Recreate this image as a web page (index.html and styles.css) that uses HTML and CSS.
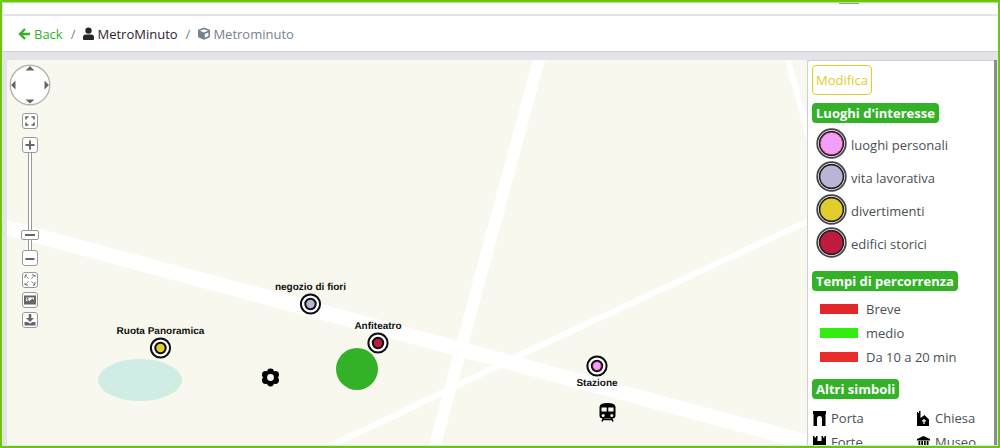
FILE: index.html
```html
<!DOCTYPE html>
<html lang="it">
<head>
    <meta charset="UTF-8">
    <meta name="viewport" content="width=device-width, initial-scale=1.0">
    <title>Metrominuto</title>
    <link rel="stylesheet" href="styles.css">
</head>
<body>
    <header class="topbar">
        <div class="tab-handle"></div>
    </header>

    <nav class="breadcrumb" aria-label="breadcrumb">
        <a href="#" class="back">
            <svg width="13" height="14" viewBox="0 0 13 14"><path d="M7 2 L2 7 L7 12 M2 7 H12" fill="none" stroke="currentColor" stroke-width="2.4"/></svg>
            Back
        </a>
        <span class="slash">/</span>
        <a href="#" class="project">
            <svg width="11" height="13" viewBox="0 0 11 13"><circle cx="5.5" cy="3.6" r="3.2"/><path d="M0 12 V10 Q0 7.5 3 7.5 H8 Q11 7.5 11 10 V12 Q11 13 10.2 13 H.8 Q0 13 0 12Z"/></svg>
            MetroMinuto
        </a>
        <span class="slash">/</span>
        <span class="current">
            <svg width="12" height="13" viewBox="0 0 12 13"><path d="M6 .5 L11.3 2.5 Q12 2.8 12 3.5 V9.3 Q12 10 11.3 10.4 L6 12.8 L.7 10.4 Q0 10 0 9.3 V3.5 Q0 2.8 .7 2.5Z"/><path d="M1.8 3.7 L6 2.2 L10.2 3.7 L6 5.4Z M6.8 7 L10.4 5.4 V9 L6.8 10.8Z" fill="#fff"/></svg>
            Metrominuto
        </span>
    </nav>

    <main class="content">
        <section class="map">
            <svg class="map-canvas" width="100%" height="100%">
                <!-- roads -->
                <g class="roads">
                    <path d="M-10 165 L393 273 L900 409" stroke-width="15"/>
                    <path d="M536 -15 L425 396" stroke-width="12"/>
                    <path d="M810 157 L513 295 L393 353 L310 392" stroke-width="6"/>
                    <path d="M778 -10 L790 33 L803 81" stroke-width="6"/>
                </g>

                <ellipse cx="133" cy="320" rx="42" ry="21" fill="#cfede4"/>
                <circle cx="350" cy="309" r="21" fill="#33b127"/>

                <!-- places -->
                <g class="place">
                    <circle class="ring" cx="153.5" cy="288" r="9.6"/>
                    <circle class="dot" cx="153.5" cy="288" r="5.2" fill="#e0cd2b"/>
                    <text x="153.5" y="274">Ruota Panoramica</text>
                </g>
                <g class="place">
                    <circle class="ring" cx="303.5" cy="244" r="9.6"/>
                    <circle class="dot" cx="303.5" cy="244" r="5.2" fill="#b9b6d5"/>
                    <text x="303.5" y="230">negozio di fiori</text>
                </g>
                <g class="place">
                    <circle class="ring" cx="371" cy="283" r="9.6"/>
                    <circle class="dot" cx="371" cy="283" r="5.2" fill="#c01a3f"/>
                    <text x="371" y="269">Anfiteatro</text>
                </g>
                <g class="place">
                    <circle class="ring" cx="590" cy="306" r="9.6"/>
                    <circle class="dot" cx="590" cy="306" r="5.2" fill="#f29ffa"/>
                    <circle class="dashes" cx="590" cy="306" r="4.2"/>
                    <text x="590" y="326">Stazione</text>
                </g>

                <!-- flower -->
                <g transform="translate(263.5 317.5)">
                    <circle cx="0" cy="-5.5" r="3.4"/>
                    <circle cx="4.9" cy="-2.8" r="3.6"/>
                    <circle cx="4.9" cy="2.8" r="3.6"/>
                    <circle cx="0" cy="5.5" r="3.4"/>
                    <circle cx="-4.9" cy="2.8" r="3.6"/>
                    <circle cx="-4.9" cy="-2.8" r="3.6"/>
                    <circle r="6"/>
                    <circle r="3.4" fill="#f8f8ef"/>
                </g>

                <!-- train -->
                <g transform="translate(592.5 343)">
                    <path d="M0 4 Q0 0 8 0 Q16 0 16 4 V12.5 Q16 15.5 13 15.5 H3 Q0 15.5 0 12.5Z"/>
                    <path d="M4 15 L2.5 18.5 M12 15 L13.5 18.5 M3.5 16.5 H12.5" fill="none" stroke="#000" stroke-width="1.5"/>
                    <path d="M2 4.5 H7.2 V8.5 H2Z M8.8 4.5 H14 V8.5 H8.8Z" fill="#f8f8ef"/>
                    <circle cx="3.7" cy="12.6" r="1.5" fill="#f8f8ef"/>
                    <circle cx="12.3" cy="12.6" r="1.5" fill="#f8f8ef"/>
                </g>
            </svg>

            <div class="map-controls">
                <button type="button" class="pan" aria-label="Pan">
                    <svg width="42" height="42" viewBox="0 0 42 42">
                        <circle cx="21" cy="21" r="19.8" fill="#fff" stroke="#b4b4b4" stroke-width="1.4"/>
                        <path d="M21 2 L25.5 6.5 H16.5Z M21 39.5 L25.5 35.5 H16.5Z M2 21 L6.5 16.5 V25.5Z M40 21 L35.5 16.5 V25.5Z" fill="#666"/>
                    </svg>
                </button>
                <button type="button" class="ctl extent" aria-label="Extent">
                    <svg width="10" height="10" viewBox="0 0 10 10"><path d="M1 3.5 V1 H3.5 M6.5 1 H9 V3.5 M9 6.5 V9 H6.5 M3.5 9 H1 V6.5" stroke-width="1.6"/></svg>
                </button>
                <button type="button" class="ctl" aria-label="Zoom in">
                    <svg width="10" height="10" viewBox="0 0 10 10"><path d="M5 .5 V9.5 M.5 5 H9.5" stroke-width="2"/></svg>
                </button>
                <div class="zoom-track">
                    <button type="button" class="zoom-thumb" aria-label="Zoom level"></button>
                </div>
                <button type="button" class="ctl zoom-out" aria-label="Zoom out">
                    <svg width="10" height="10" viewBox="0 0 10 10"><path d="M.5 6 H9.5" stroke-width="2"/></svg>
                </button>
                <button type="button" class="ctl tool" aria-label="Full screen">
                    <svg width="12" height="12" viewBox="0 0 12 12"><path d="M1 4 V1 H4 M8 1 H11 V4 M11 8 V11 H8 M4 11 H1 V8 M1 1 L4.5 4.5 M11 1 L7.5 4.5 M11 11 L7.5 7.5 M1 11 L4.5 7.5" stroke-width="1" stroke-dasharray="2 1"/></svg>
                </button>
                <button type="button" class="ctl tool" aria-label="Image">
                    <svg width="12" height="10" viewBox="0 0 12 10"><path d="M1 1.5 H11 V8.5 H1Z"/><path d="M1.5 8.5 V7 L4 5 L5.5 6 L8.5 3.5 L10.5 5.5 V8.5Z" class="solid"/><circle cx="3.5" cy="3.7" r="1" class="solid"/></svg>
                </button>
                <button type="button" class="ctl tool" aria-label="Download">
                    <svg width="12" height="12" viewBox="0 0 12 12"><path d="M4.7 0 H7.3 V4 H10 L6 8 L2 4 H4.7Z M0.5 8 H3.5 L6 9.5 L8.5 8 H11.5 V11.5 H0.5Z" class="solid"/></svg>
                </button>
            </div>
        </section>

        <aside class="legend">
            <button type="button" class="edit">Modifica</button>

            <h2>Luoghi d'interesse</h2>
            <ul class="places">
                <li><svg width="31" height="31" viewBox="0 0 31 31"><circle class="outer" cx="15.5" cy="15.5" r="14.3"/><circle class="inner" cx="15.5" cy="15.5" r="11.9" fill="#f29ffa"/><circle class="dashes" cx="15.5" cy="15.5" r="11"/></svg>luoghi personali</li>
                <li><svg width="31" height="31" viewBox="0 0 31 31"><circle class="outer" cx="15.5" cy="15.5" r="14.3"/><circle class="inner" cx="15.5" cy="15.5" r="11.9" fill="#b9b6d5"/></svg>vita lavorativa</li>
                <li><svg width="31" height="31" viewBox="0 0 31 31"><circle class="outer" cx="15.5" cy="15.5" r="14.3"/><circle class="inner" cx="15.5" cy="15.5" r="11.9" fill="#e0cd2b"/></svg>divertimenti</li>
                <li><svg width="31" height="31" viewBox="0 0 31 31"><circle class="outer" cx="15.5" cy="15.5" r="14.3"/><circle class="inner" cx="15.5" cy="15.5" r="11.9" fill="#c01a3f"/></svg>edifici storici</li>
            </ul>

            <h2>Tempi di percorrenza</h2>
            <ul class="times">
                <li><span class="bar short"></span>Breve</li>
                <li><span class="bar medium"></span>medio</li>
                <li><span class="bar long"></span>Da 10 a 20 min</li>
            </ul>

            <h2>Altri simboli</h2>
            <ul class="symbols">
                <li><svg width="13" height="15" viewBox="0 0 13 15"><path d="M0 0 H13 V3 H12.5 V15 H9 V8 Q9 5 6.5 5 Q4 5 4 8 V15 H.5 V3 H0Z"/></svg>Porta</li>
                <li><svg width="13" height="15" viewBox="0 0 13 15"><path d="M0 1 H1 V2 H2 V0 H3.5 V7 L7.5 4 L12 8.5 V15 H0Z"/><path d="M7 8 V13 M5 9.8 H9" stroke="#fff" stroke-width="1.2"/></svg>Chiesa</li>
                <li><svg width="13" height="15" viewBox="0 0 13 15"><path d="M0 1 H1.5 V2.5 H3 V1 H4.5 V6 H8.5 V1 H10 V2.5 H11.5 V1 H13 V15 H8.5 V11 H4.5 V15 H0Z"/></svg>Forte</li>
                <li><svg width="13" height="15" viewBox="0 0 13 15"><path d="M6.5 1 L13 4 V5.5 H0 V4Z M1.5 6 H3.3 V12 H1.5Z M4.3 6 H6 V12 H4.3Z M7 6 H8.7 V12 H7Z M9.7 6 H11.5 V12 H9.7Z M0 12.5 H13 V14 H0Z"/></svg>Museo</li>
            </ul>
        </aside>
        <div class="scrollbar"></div>
    </main>
</body>
</html>
```
FILE: styles.css
```css
* {
    box-sizing: border-box;
}

body {
    display: flex;
    flex-direction: column;
    height: 100vh;
    margin: 0;
    border: 2px solid #6cc70a;
    background-color: #e3e4e7;
    color: #4a4f54;
    font-family: "Open Sans", "Segoe UI", sans-serif;
    font-size: 13px;
    line-height: 20px;
    overflow: hidden;
}

button {
    padding: 0;
    font: inherit;
    cursor: pointer;
}

ul {
    list-style: none;
    margin: 0;
    padding: 0;
}

svg {
    display: block;
    flex-shrink: 0;
}

/* Header */
.topbar {
    flex: none;
    height: 14px;
    background-color: #fff;
    border-top: 1px solid #b5e384;
    border-bottom: 2px solid #e3e4e7;
    margin-left: 1px;
}

.tab-handle {
    width: 20px;
    height: 1px;
    margin-left: 84%;
    background-color: #8fa58a;
}

.breadcrumb {
    display: flex;
    flex: none;
    align-items: center;
    gap: 8px;
    height: 36px;
    margin-left: 1px;
    padding-left: 15px;
    background-color: #fff;
    border-bottom: 1px solid #cdcfd3;
}

.breadcrumb a,
.breadcrumb .current {
    display: flex;
    align-items: center;
    gap: 3px;
    text-decoration: none;
}

.breadcrumb svg {
    fill: currentColor;
}

.back {
    color: #33b127;
}

.project {
    color: #2b2528;
}

.slash,
.current {
    color: #758290;
}

/* Map */
.content {
    display: flex;
    flex: 1;
    min-height: 0;
    padding: 8px 1px 1px 5px;
}

.map {
    position: relative;
    flex: 1;
    min-width: 0;
    background-color: #f8f8ef;
    border-radius: 3px 3px 0 0;
    overflow: hidden;
}

.map-canvas {
    position: absolute;
    top: 0;
    left: 0;
}

.roads path {
    fill: none;
    stroke: #fff;
}

.place text {
    font-family: "Liberation Sans", Arial, sans-serif;
    font-size: 10px;
    font-weight: bold;
    text-anchor: middle;
    text-rendering: geometricPrecision;
    fill: #111;
}

.ring {
    fill: #fff;
    stroke: #0d0d12;
    stroke-width: 2;
}

.dot {
    stroke: #0d0d12;
    stroke-width: 2;
}

.dashes {
    fill: none;
    stroke: #c01a3f;
    stroke-width: 1;
    stroke-dasharray: 2 2;
}

.map-controls {
    position: absolute;
    top: 4px;
    left: 3px;
    display: flex;
    flex-direction: column;
    align-items: center;
    width: 40px;
}

.pan {
    border: none;
    background: none;
}

.ctl {
    display: flex;
    align-items: center;
    justify-content: center;
    width: 16px;
    height: 16px;
    border: 1px solid #999;
    border-radius: 3px;
    background-color: #fff;
}

.ctl svg {
    fill: none;
    stroke: #666;
    stroke-width: 2;
}

.ctl .solid {
    fill: #666;
    stroke: none;
}

.extent {
    margin: 7px 0 8px;
}

.zoom-track {
    display: flex;
    align-items: flex-end;
    justify-content: center;
    width: 4px;
    height: 97px;
    padding-bottom: 10px;
    border: solid #999;
    border-width: 0 1px;
    background-color: #fff;
}

.zoom-thumb {
    flex: none;
    width: 18px;
    height: 10px;
    border: 1px solid #999;
    border-radius: 2px;
    background: linear-gradient(#666, #666) center / 10px 2px no-repeat #fff;
}

.zoom-out {
    margin-bottom: 2px;
}

.tool {
    margin-top: 4px;
}

/* Legend */
.legend {
    flex: none;
    width: 187px;
    padding: 4px;
    border: 1px solid #cdcfd3;
    border-width: 1px 0 0 1px;
    border-radius: 3px 0 0 0;
    background-color: #fff;
    overflow: hidden;
}

.scrollbar {
    flex: none;
    width: 3px;
    background-color: #8c8c8c;
}

.edit {
    display: block;
    height: 30px;
    margin-bottom: 8px;
    padding: 0 3px;
    border: 1px solid #e0cd2b;
    border-radius: 4px;
    background-color: #fff;
    color: #e0cd2b;
}

.legend h2 {
    width: fit-content;
    margin: 0;
    padding: 0 4px;
    border-radius: 4px;
    background-color: #33b127;
    color: #fff;
    font-size: 13px;
    font-weight: bold;
}

.legend li {
    display: flex;
    align-items: center;
}

.places {
    padding: 5px 4px 11px;
}

.places li {
    gap: 4px;
    height: 33px;
}

.places svg {
    margin-bottom: 2px;
}

.outer {
    fill: #fff;
    stroke: #444;
    stroke-width: 1.8;
}

.inner {
    stroke: #222;
    stroke-width: 1.6;
}

.times {
    padding: 6px 8px 10px;
}

.times li {
    gap: 8px;
    height: 24px;
}

.bar {
    width: 38px;
    height: 10px;
}

.short {
    background-color: #e2262a;
}

.medium {
    background-color: #30ee10;
}

.long {
    background-color: #ea2c2a;
}

.symbols {
    display: grid;
    grid-template-columns: 104px 1fr;
    padding: 7px 1px;
}

.symbols li {
    gap: 5px;
    height: 24px;
}

.symbols svg {
    fill: #000;
}
```
